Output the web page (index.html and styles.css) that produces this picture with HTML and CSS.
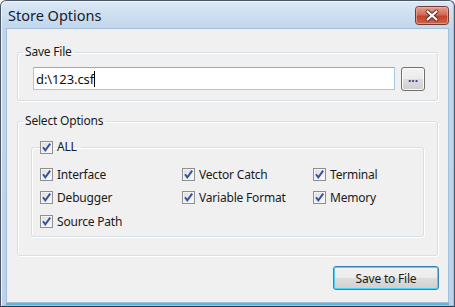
FILE: index.html
```html
<!DOCTYPE html>
<html>
<head>
<meta charset="utf-8">
<link rel="stylesheet" href="styles.css">
</head>
<body>
<div class="window">
  <div class="titlebar">
    <span class="title">Store Options</span>
    <div class="close">
      <svg width="34" height="19" viewBox="0 0 34 19">
        <defs>
          <linearGradient id="cg" x1="0" y1="0" x2="0" y2="1">
            <stop offset="0" stop-color="#e8a493"/>
            <stop offset="0.45" stop-color="#d46a55"/>
            <stop offset="0.55" stop-color="#c2432c"/>
            <stop offset="1" stop-color="#d0664a"/>
          </linearGradient>
        </defs>
        <rect x="0.5" y="0.5" width="33" height="18" rx="3" fill="url(#cg)" stroke="#6e3a33"/>
        <rect x="1.5" y="1.5" width="31" height="16" rx="2" fill="none" stroke="#f0b8a8" stroke-opacity="0.6"/>
        <path d="M12.5 5.5 L21.5 13.5 M21.5 5.5 L12.5 13.5" stroke="#5a2a24" stroke-width="4" stroke-linecap="round"/>
        <path d="M12.5 5.5 L21.5 13.5 M21.5 5.5 L12.5 13.5" stroke="#ffffff" stroke-width="2.2" stroke-linecap="round"/>
      </svg>
    </div>
  </div>
  <div class="client">
    <fieldset class="group save-group">
      <legend class="group-label">Save File</legend>
      <div class="file-row">
        <div class="textbox"><span class="value">d:\123.csf</span><span class="caret"></span></div>
        <div class="browse"><span>...</span></div>
      </div>
    </fieldset>
    <fieldset class="group select-group">
      <legend class="group-label">Select Options</legend>
      <fieldset class="all-group">
        <legend class="all-legend">
          <span class="cb"><span class="box"><svg width="11" height="11" viewBox="0 0 11 11"><path d="M2 5.3 L4.3 8.4 L9.2 1.6" fill="none" stroke="#34509e" stroke-width="1.9"/></svg></span>ALL</span>
        </legend>
        <div class="options">
          <span class="cb"><span class="box"><svg width="11" height="11" viewBox="0 0 11 11"><path d="M2 5.3 L4.3 8.4 L9.2 1.6" fill="none" stroke="#34509e" stroke-width="1.9"/></svg></span>Interface</span>
          <span class="cb"><span class="box"><svg width="11" height="11" viewBox="0 0 11 11"><path d="M2 5.3 L4.3 8.4 L9.2 1.6" fill="none" stroke="#34509e" stroke-width="1.9"/></svg></span>Vector Catch</span>
          <span class="cb"><span class="box"><svg width="11" height="11" viewBox="0 0 11 11"><path d="M2 5.3 L4.3 8.4 L9.2 1.6" fill="none" stroke="#34509e" stroke-width="1.9"/></svg></span>Terminal</span>
          <span class="cb"><span class="box"><svg width="11" height="11" viewBox="0 0 11 11"><path d="M2 5.3 L4.3 8.4 L9.2 1.6" fill="none" stroke="#34509e" stroke-width="1.9"/></svg></span>Debugger</span>
          <span class="cb"><span class="box"><svg width="11" height="11" viewBox="0 0 11 11"><path d="M2 5.3 L4.3 8.4 L9.2 1.6" fill="none" stroke="#34509e" stroke-width="1.9"/></svg></span>Variable Format</span>
          <span class="cb"><span class="box"><svg width="11" height="11" viewBox="0 0 11 11"><path d="M2 5.3 L4.3 8.4 L9.2 1.6" fill="none" stroke="#34509e" stroke-width="1.9"/></svg></span>Memory</span>
          <span class="cb"><span class="box"><svg width="11" height="11" viewBox="0 0 11 11"><path d="M2 5.3 L4.3 8.4 L9.2 1.6" fill="none" stroke="#34509e" stroke-width="1.9"/></svg></span>Source Path</span>
        </div>
      </fieldset>
    </fieldset>
    <div class="footer">
      <div class="save-btn">Save to File</div>
    </div>
  </div>
</div>
</body>
</html>
```
FILE: styles.css
```css
* { box-sizing: border-box; }
html, body { margin: 0; padding: 0; }
body {
  width: 455px;
  height: 307px;
  overflow: hidden;
  background: #ffffff;
  font-family: "Noto Sans", "Open Sans", sans-serif;
  font-size: 12px;
  letter-spacing: -0.2px;
  color: #1a1a1a;
}
.window {
  width: 455px;
  height: 307px;
  display: flex;
  flex-direction: column;
  border: 1px solid #4c5866;
  border-bottom: 1px solid #2a3a48;
  border-radius: 6px 6px 0 0;
  background: linear-gradient(#dce8f5 0px, #c0d6ec 28px, #bcd3eb 100%);
  box-shadow: inset 1px 1px 0 #eef4fb, inset -1px -1px 0 #9fc3e0;
}
.titlebar {
  height: 27px;
  display: flex;
  align-items: center;
  justify-content: space-between;
  padding: 0 5px 0 7px;
  flex: none;
}
.title {
  font-size: 14.5px;
  color: #14202e;
  letter-spacing: 0px;
  padding-top: 1px;
}
.close {
  width: 34px;
  height: 19px;
  margin-top: 2px;
  display: flex;
}
.client {
  flex: 1;
  margin: 0 5px 3px 5px;
  background: #f0f0f0;
  border: 1px solid #a4bfd9;
  box-shadow: 0 2px 0 #5fb3dc;
  display: flex;
  flex-direction: column;
  padding: 0 9px 0 10px;
}
.group {
  margin: 0;
  border: 1px solid #d5dfe5;
  border-radius: 3px;
  box-shadow: inset 1px 1px 0 #ffffff, 1px 1px 0 #ffffff;
  min-width: 0;
}
.group-label {
  padding: 0 2px;
  line-height: 16px;
  color: #1a1a1a;
}
.save-group {
  margin-top: 15px;
  margin-right: 1px;
  padding: 7px 12px 9px 5px;
}
.file-row {
  display: flex;
  align-items: flex-start;
  gap: 6px;
  margin-left: 10px;
}
.textbox {
  flex: 1;
  height: 23px;
  background: #ffffff;
  border: 1px solid #a9c8e6;
  border-top-color: #7fb0dc;
  border-radius: 1px;
  display: flex;
  align-items: center;
  padding-left: 2px;
  font-size: 13px;
  letter-spacing: -0.1px;
  color: #111;
}
.caret {
  width: 1px;
  height: 16px;
  background: #000;
}
.browse {
  width: 24px;
  height: 24px;
  border: 1px solid #707070;
  border-radius: 3px;
  background: linear-gradient(#f3f3f3 0%, #ebebeb 50%, #dddddd 51%, #cfcfcf 100%);
  box-shadow: inset 0 0 0 1px #fbfbfb;
  display: flex;
  align-items: flex-end;
  justify-content: center;
  font-size: 12px;
  line-height: 12px;
  padding-bottom: 6px;
  color: #2a3d8f;
  letter-spacing: 0px;
  font-weight: bold;
}
.select-group {
  margin-top: 12px;
  margin-right: 1px;
  padding: 10px 13px 18px 5px;
}
.all-group {
  margin: 0 0 0 8px;
  border: 1px solid #d5dfe5;
  border-radius: 3px;
  box-shadow: inset 1px 1px 0 #ffffff, 1px 1px 0 #ffffff;
  padding: 9px 8px 5px 8px;
  min-width: 0;
}
.all-legend {
  padding: 0 4px 0 0;
  line-height: 16px;
}
.options {
  display: grid;
  grid-template-columns: 142px 131px 1fr;
  grid-auto-rows: 20px;
  row-gap: 3.5px;
}
.cb {
  display: flex;
  align-items: center;
  gap: 4px;
  white-space: nowrap;
  color: #1a1a1a;
}
.box {
  width: 13px;
  height: 13px;
  border: 1px solid #8f8f8f;
  background: linear-gradient(135deg, #dcdcdc, #fbfbfb);
  box-shadow: inset 0 0 0 1px #f4f4f4;
  display: flex;
  align-items: center;
  justify-content: center;
  flex: none;
}
.box svg { display: block; }
.footer {
  display: flex;
  justify-content: flex-end;
  margin-top: 10px;
}
.save-btn {
  width: 106px;
  height: 24px;
  border: 1px solid #3c7fb1;
  border-radius: 3px;
  background: linear-gradient(#f2f2f2 0%, #ebebeb 50%, #dddddd 51%, #cfcfcf 100%);
  box-shadow: inset 0 0 0 1px #48d4fb;
  display: flex;
  align-items: center;
  justify-content: center;
  color: #1a1a1a;
}
```
